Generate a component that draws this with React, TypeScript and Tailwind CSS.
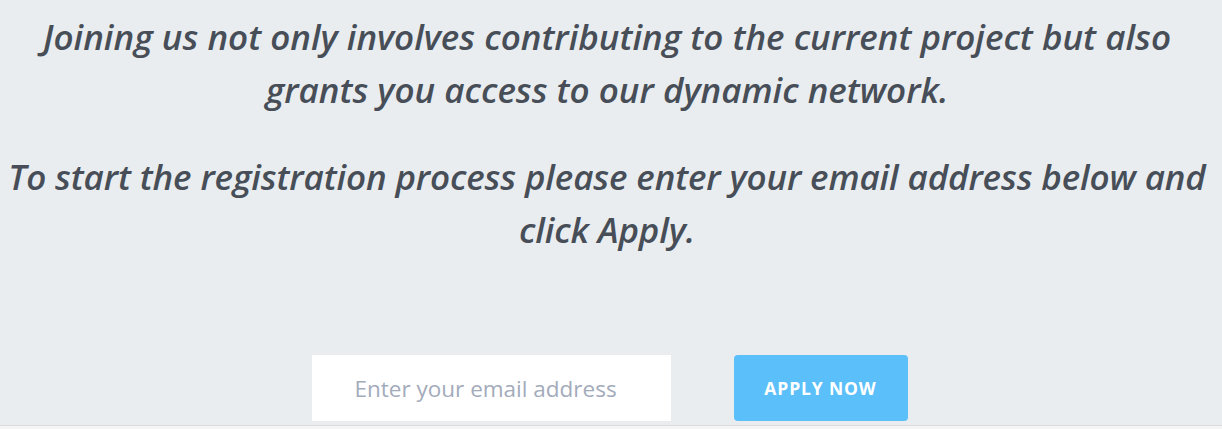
export default function App() {
  return (
    <div className="min-h-[429px] bg-[#f5f5f5] font-['Open_Sans',sans-serif]">
      <section className="h-[426px] bg-[#e9edf0] border-b border-[#dcdcdc] pt-[10px]">
        {/* Intro copy */}
        <div className="pr-2 text-center italic font-semibold text-[35px] leading-[53px] text-[#474e57]">
          <p className="px-[30px]">
            Joining us not only involves contributing to the current project but also
            grants you access to our dynamic network.
          </p>
          <p className="mt-[34px] tracking-[-0.13px]">
            To start the registration process please enter your email address below and
            click Apply.
          </p>
        </div>

        {/* Email form */}
        <form
          className="mt-[99px] pr-[3px] flex justify-center gap-[63px]"
          onSubmit={(e) => e.preventDefault()}
        >
          <input
            type="email"
            placeholder="Enter your email address"
            className="w-[359px] h-[66px] bg-white pl-[43px] text-left text-[22.5px] text-[#474e57] placeholder:text-[#a3abbb] outline-none"
          />
          <button
            type="submit"
            className="w-[174px] h-[66px] rounded-[4px] bg-[#5bbff9] text-white text-[17.5px] font-bold tracking-[0.05em] uppercase"
          >
            Apply Now
          </button>
        </form>
      </section>
    </div>
  );
}
